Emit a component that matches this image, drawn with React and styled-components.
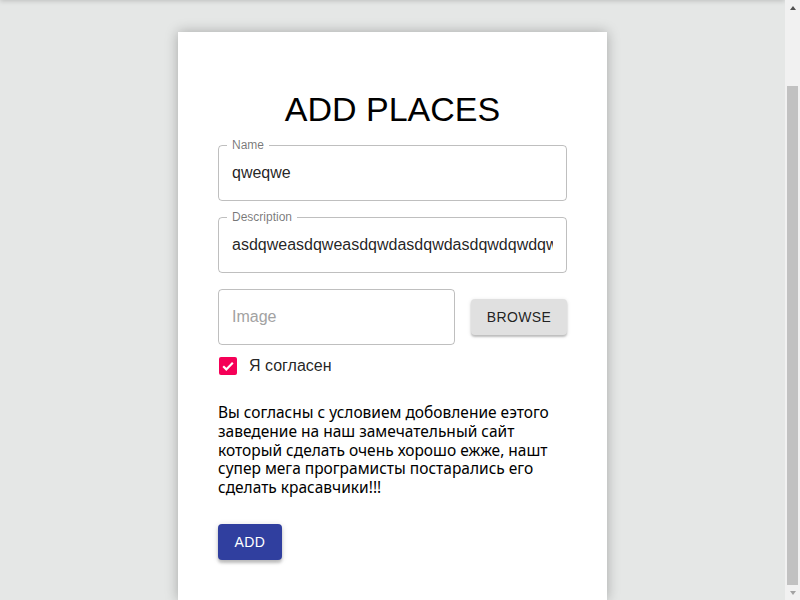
import { useLayoutEffect } from "react";
import styled, { createGlobalStyle } from "styled-components";

const GlobalStyle = createGlobalStyle`
  html, body {
    margin: 0;
    padding: 0;
  }
  body {
    background-color: #e5e7e6;
    font-family: "Liberation Sans", Arial, sans-serif;
    color: rgba(0, 0, 0, 0.87);
  }
`;

export default function App() {
  useLayoutEffect(() => {
    window.scrollTo(0, document.documentElement.scrollHeight);
  }, []);

  return (
    <>
      <GlobalStyle />
      <TopShade />
      <ScrollTrack>
        <Arrow $dir="up" />
        <Thumb />
        <Arrow $dir="down" $disabled />
      </ScrollTrack>
      <Page>
        <Card>
          <Title>ADD PLACES</Title>
          <Form>
            <Field>
              <FieldLabel>Name</FieldLabel>
              <Input defaultValue="qweqwe" />
            </Field>
            <Field>
              <FieldLabel>Description</FieldLabel>
              <Input defaultValue="asdqweasdqweasdqwdasdqwdasdqwdqwdqwdqwd" />
            </Field>
            <ImageRow>
              <Field $grow>
                <Input placeholder="Image" />
              </Field>
              <GreyButton type="button">Browse</GreyButton>
            </ImageRow>
            <CheckRow>
              <CheckBox>
                <svg width="24" height="24" viewBox="0 0 24 24">
                  <rect x="3" y="3" width="18" height="18" rx="2" fill="#f50057" />
                  <path
                    d="M7.2 12.3l3.1 3.1 6.5-6.6"
                    fill="none"
                    stroke="#fff"
                    strokeWidth="2.2"
                  />
                </svg>
              </CheckBox>
              <CheckText>Я согласен</CheckText>
            </CheckRow>
          </Form>
          <Terms>
            Вы согласны с условием добовление еэтого
            <br />
            заведение на наш замечательный сайт
            <br />
            который сделать очень хорошо ежже, нашт
            <br />
            супер мега програмисты постарались его
            <br />
            сделать красавчики!!!
          </Terms>
          <PrimaryButton type="button">Add</PrimaryButton>
        </Card>
      </Page>
    </>
  );
}

const TopShade = styled.div`
  position: fixed;
  top: -6px;
  left: 0;
  right: 15px;
  height: 6px;
  box-shadow: 0 1px 5px rgba(0, 0, 0, 0.18);
  z-index: 5;
`;

// the page is scrolled to its end, so the thumb sits at the bottom
const ScrollTrack = styled.div`
  position: fixed;
  top: 0;
  right: 0;
  width: 15px;
  height: 100vh;
  background: #f1f1f1;
  display: flex;
  flex-direction: column;
  align-items: center;
  z-index: 10;
`;

const Arrow = styled.div`
  flex: none;
  width: 15px;
  height: 15px;
  display: flex;
  align-items: center;
  justify-content: center;
  &::before {
    content: "";
    border-left: 3.5px solid transparent;
    border-right: 3.5px solid transparent;
    ${(p) =>
      p.$dir === "up"
        ? "border-bottom: 4px solid;"
        : "border-top: 4px solid;"}
    color: ${(p) => (p.$disabled ? "#a3a3a3" : "#505050")};
  }
`;

const Thumb = styled.div`
  margin-top: auto;
  width: 11px;
  height: 499px;
  background: #c1c1c1;
`;

const Page = styled.div`
  display: flex;
  justify-content: center;
  padding: 117px 15px 0 0;
`;

const Card = styled.div`
  width: 349px;
  padding: 40px;
  background: #fff;
  box-shadow: 0 0 12px rgba(0, 0, 0, 0.28);
`;

const Title = styled.h1`
  margin: 17px 0 16px;
  font-size: 34px;
  line-height: 40px;
  font-weight: 400;
  text-align: center;
  color: #000;
`;

const Form = styled.div`
  display: flex;
  flex-direction: column;
  gap: 16px;
`;

const Field = styled.div`
  position: relative;
  box-sizing: border-box;
  height: 56px;
  border: 1px solid rgba(0, 0, 0, 0.25);
  border-radius: 4px;
  display: flex;
  align-items: center;
  flex: ${(p) => (p.$grow ? "1" : "none")};
`;

const FieldLabel = styled.span`
  position: absolute;
  top: -8px;
  left: 8px;
  padding: 0 5px;
  background: #fff;
  font-size: 12px;
  line-height: 14px;
  color: rgba(0, 0, 0, 0.54);
`;

const Input = styled.input`
  width: 100%;
  min-width: 0;
  box-sizing: border-box;
  border: none;
  outline: none;
  background: transparent;
  padding: 0 13px;
  font-family: "Liberation Sans", Arial, sans-serif;
  font-size: 16px;
  color: rgba(0, 0, 0, 0.87);
  &::placeholder {
    color: #a2a2a2;
  }
`;

const ImageRow = styled.div`
  display: flex;
  align-items: center;
  gap: 16px;
`;

const GreyButton = styled.button`
  width: 96px;
  height: 36px;
  border: none;
  border-radius: 4px;
  background: #e0e0e0;
  box-shadow: 0 2px 2px rgba(0, 0, 0, 0.2), 0 1px 4px rgba(0, 0, 0, 0.12);
  font-family: "Liberation Sans", Arial, sans-serif;
  font-size: 14px;
  letter-spacing: 0.4px;
  text-transform: uppercase;
  color: rgba(0, 0, 0, 0.87);
`;

const CheckRow = styled.label`
  display: flex;
  align-items: center;
  margin: -16px 0 0 -11px;
`;

const CheckBox = styled.span`
  display: flex;
  padding: 9px;
`;

const CheckText = styled.span`
  font-size: 16px;
  color: rgba(0, 0, 0, 0.87);
`;

const Terms = styled.p`
  margin: 16px 0 27px;
  font-family: "Noto Sans", sans-serif;
  font-size: 15.5px;
  line-height: 18.75px;
  white-space: nowrap;
  color: #000;
`;

const PrimaryButton = styled.button`
  width: 64px;
  height: 36px;
  border: none;
  border-radius: 4px;
  background: #303f9f;
  box-shadow: 0 3px 3px rgba(0, 0, 0, 0.2), 0 1px 6px rgba(0, 0, 0, 0.14);
  font-family: "Liberation Sans", Arial, sans-serif;
  font-size: 14px;
  letter-spacing: 0.4px;
  text-transform: uppercase;
  color: #fff;
`;
